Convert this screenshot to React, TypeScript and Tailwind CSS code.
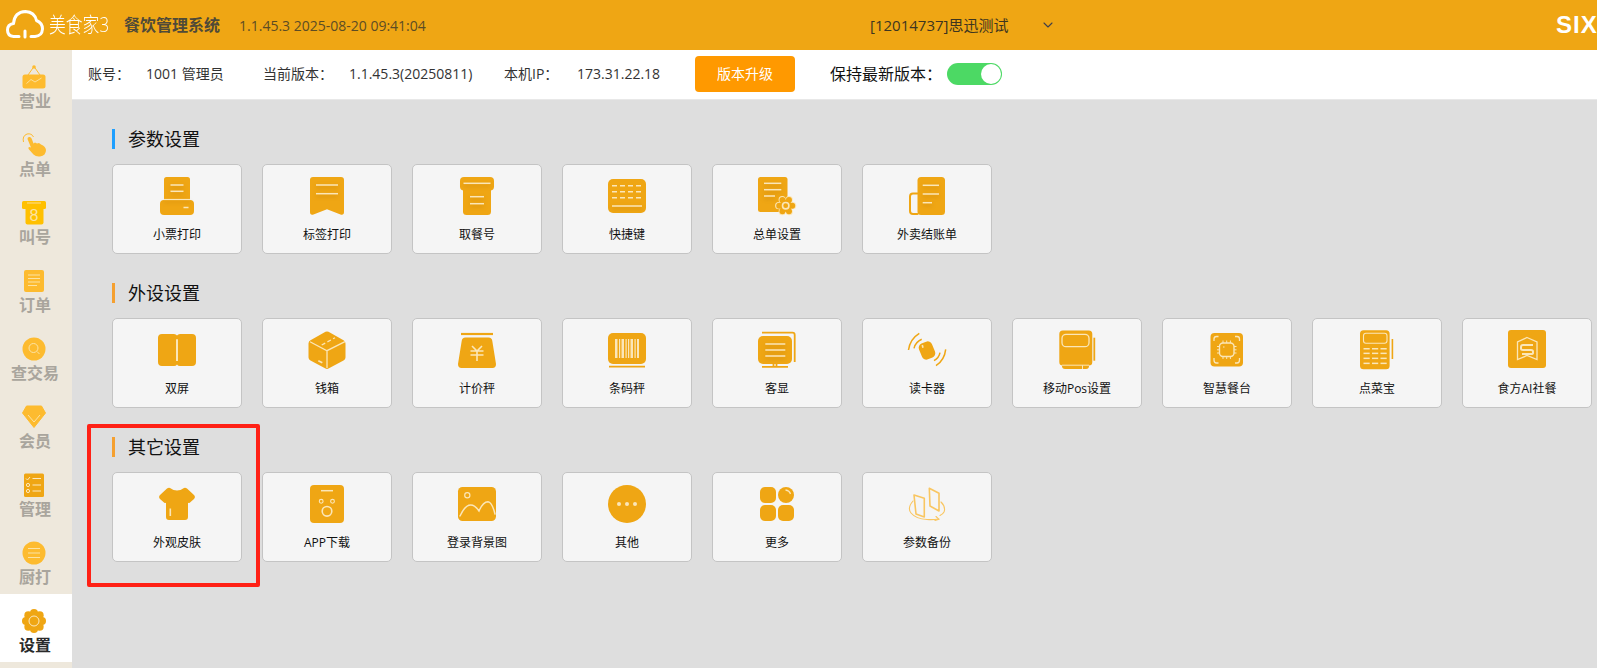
import React from 'react';
import { ChevronDown } from 'lucide-react';

const OR = '#EFA614';
const CR = '#FBE6B8';
const YL = '#FDBB2F';

type IconFn = () => React.ReactNode;

// card icons, 40x40 box
const Icon: React.FC<{ children: React.ReactNode }> = ({ children }) => (
  <svg width="40" height="40" viewBox="0 0 40 40" fill="none" strokeLinecap="round" className="block shrink-0">
    {children}
  </svg>
);

const Lines: React.FC<{ x1: number; x2: number; ys: number[]; w?: number }> = ({ x1, x2, ys, w = 1.5 }) => (
  <g className="drop-shadow-[0_2px_2px_rgba(150,90,0,0.35)]">
    {ys.map((y) => (
      <path key={y} d={`M${x1} ${y}H${x2}`} stroke={CR} strokeWidth={w} strokeLinecap="butt" />
    ))}
  </g>
);

const Petals: React.FC<{ cx: number; cy: number; r: number; pr: number; n: number; fill: string }> = ({ cx, cy, r, pr, n, fill }) => (
  <>
    {Array.from({ length: n }).map((_, i) => {
      const a = (i * Math.PI * 2) / n;
      return <circle key={i} cx={cx + Math.cos(a) * r} cy={cy + Math.sin(a) * r} r={pr} fill={fill} />;
    })}
  </>
);

const paramItems: { label: string; icon: IconFn }[] = [
  {
    label: '小票打印',
    icon: () => (
      <Icon>
        <path d="M9.5 1H30.5Q33 1 33 3.5V24H7V3.5Q7 1 9.5 1Z" fill={OR} />
        <rect x="3" y="24" width="34" height="15" rx="4" fill={OR} />
        <Lines x1={13.5} x2={26.5} ys={[9, 15.3]} />
        <Lines x1={7} x2={33} ys={[23.5]} w={1.2} />
        <path d="M26.5 31.5H31.5" stroke={CR} strokeWidth="1.5" strokeLinecap="butt" />
      </Icon>
    ),
  },
  {
    label: '标签打印',
    icon: () => (
      <Icon>
        <path d="M6 1H34Q37 1 37 4V36Q37 39.5 33.5 38.5L20 33.3L6.5 38.5Q3 39.5 3 36V4Q3 1 6 1Z" fill={OR} />
        <Lines x1={9} x2={31} ys={[9, 17.7]} />
      </Icon>
    ),
  },
  {
    label: '取餐号',
    icon: () => (
      <Icon>
        <rect x="3" y="1" width="34" height="13.5" rx="4" fill={OR} />
        <path d="M6 10H34V35.5Q34 39 30.5 39H9.5Q6 39 6 35.5Z" fill={OR} />
        <Lines x1={6.5} x2={33.5} ys={[7.3]} />
        <Lines x1={13} x2={27} ys={[20.7, 27.7]} />
      </Icon>
    ),
  },
  {
    label: '快捷键',
    icon: () => (
      <Icon>
        <rect x="1" y="3" width="38" height="34" rx="5" fill={OR} />
        {[9.7, 15.7, 21.7].map((y) => (
          <path key={y} d={`M5 ${y}H35`} stroke={CR} strokeWidth="1.5" strokeDasharray="5 3" strokeLinecap="butt" />
        ))}
        <Lines x1={5} x2={35} ys={[30]} />
      </Icon>
    ),
  },
  {
    label: '总单设置',
    icon: () => (
      <Icon>
        <rect x="1" y="1" width="29.5" height="35" rx="2.5" fill={OR} />
        <Lines x1={7} x2={24.3} ys={[7.3, 13.7]} />
        <Lines x1={7} x2={18} ys={[20]} />
        <Petals cx={28.7} cy={29.7} r={7} pr={3.6} n={6} fill={CR} />
        <Petals cx={28.7} cy={29.7} r={6.5} pr={3} n={6} fill={OR} />
        <circle cx="28.7" cy="29.7" r="6" fill={OR} />
        <circle cx="28.7" cy="29.7" r="3.2" stroke={CR} strokeWidth="1.6" />
      </Icon>
    ),
  },
  {
    label: '外卖结账单',
    icon: () => (
      <Icon>
        <rect x="10.5" y="1" width="27.5" height="38" rx="3.5" fill={OR} />
        <path d="M10.5 17.5H6Q3 17.5 3 20.5V35Q3 38 6 38H10.5" stroke={OR} strokeWidth="2" />
        <Lines x1={15.7} x2={32} ys={[9.3, 18]} />
        <Lines x1={15.7} x2={25} ys={[26.7]} />
      </Icon>
    ),
  },
];

const deviceItems: { label: string; icon: IconFn }[] = [
  {
    label: '双屏',
    icon: () => (
      <Icon>
        <path d="M5 4H17Q19 4 20 5.5Q21 4 23 4H35Q39 4 39 8V32Q39 36 35 36H23Q21 36 20 34.5Q19 36 17 36H5Q1 36 1 32V8Q1 4 5 4Z" fill={OR} />
        <path d="M20 9.3V31" stroke={CR} strokeWidth="2" strokeLinecap="butt" />
      </Icon>
    ),
  },
  {
    label: '钱箱',
    icon: () => (
      <Icon>
        <path d="M18.5 1.8Q20 1 21.5 1.8L36.5 10.2Q38.5 11.3 38.5 13.5V27.5Q38.5 29.5 36.5 30.5L21.5 38.5Q20 39.3 18.5 38.5L3.5 30.5Q1.5 29.5 1.5 27.5V13.5Q1.5 11.3 3.5 10.2Z" fill={OR} />
        <path d="M3 11.7L20 20.7L38 11.7M20 20.7V38" stroke={CR} strokeWidth="1.3" strokeLinecap="butt" />
        <path d="M14.7 15L28 7.7" stroke={CR} strokeWidth="1.3" strokeDasharray="4 2.5" strokeLinecap="butt" />
        <path d="M11.3 30.7L15.3 32.7" stroke={CR} strokeWidth="1.6" strokeLinecap="butt" />
      </Icon>
    ),
  },
  {
    label: '计价秤',
    icon: () => (
      <Icon>
        <path d="M4 4H36" stroke={OR} strokeWidth="2.2" strokeLinecap="butt" />
        <path d="M8.5 7.5H31.5Q35 7.5 35.3 11L39 34Q39 38 35.5 38H4.5Q1 38 1 34L4.7 11Q5 7.5 8.5 7.5Z" fill={OR} />
        <path d="M15 16L20 21L25 16M13.5 21H26.5M13.5 25H26.5M20 21V31" stroke={CR} strokeWidth="1.6" strokeLinecap="butt" />
      </Icon>
    ),
  },
  {
    label: '条码秤',
    icon: () => (
      <Icon>
        <rect x="1" y="3" width="38" height="31" rx="5" fill={OR} />
        <path d="M2 36.7H38" stroke={OR} strokeWidth="1.8" strokeLinecap="butt" />
        {[
          [8, 2.5],
          [12, 1.2],
          [14.5, 2.5],
          [18.5, 1.2],
          [21, 1.2],
          [23.5, 2.5],
          [27.5, 1.2],
          [30, 2],
        ].map(([x, w]) => (
          <rect key={x} x={x} y="9" width={w} height="19" fill={CR} />
        ))}
      </Icon>
    ),
  },
  {
    label: '客显',
    icon: () => (
      <Icon>
        <path d="M5 2.7H35.5Q37.7 2.7 37.7 5V32" stroke={OR} strokeWidth="1.8" strokeLinecap="butt" />
        <rect x="1" y="6" width="34" height="28" rx="5" fill={OR} />
        <path d="M5 36.8H31M16.5 34V36M19.5 34V36" stroke={OR} strokeWidth="1.8" strokeLinecap="butt" />
        <Lines x1={8.3} x2={28.3} ys={[14, 20, 26]} />
      </Icon>
    ),
  },
  {
    label: '读卡器',
    icon: () => (
      <Icon>
        <rect x="13" y="12" width="14" height="17" rx="4.5" transform="rotate(-22 20 20.5)" fill={OR} />
        <path d="M15.3 15L16 17.8" stroke={CR} strokeWidth="1.6" strokeLinecap="butt" />
        <path d="M1.5 20Q3 9 12.3 3.3M7 18.3Q8.5 12 14.7 9.3M38.7 19.3Q37.5 30 29 35.7M33 22.7Q32 28 27 30.7" stroke={OR} strokeWidth="1.5" strokeLinecap="butt" />
      </Icon>
    ),
  },
  {
    label: '移动Pos设置',
    icon: () => (
      <Icon>
        <path d="M5 35H32V36Q32 39 29 39H8Q5 39 5 36Z" fill={OR} />
        <rect x="2.3" y="0.5" width="33" height="35" rx="3.5" fill={OR} />
        <rect x="36.4" y="7.7" width="1.8" height="23" fill={OR} />
        <rect x="5" y="4.3" width="27" height="12.4" rx="4" stroke={CR} strokeWidth="1.3" />
        <path d="M5 35.2H32M25.5 35.2V39" stroke={CR} strokeWidth="1" strokeLinecap="butt" />
      </Icon>
    ),
  },
  {
    label: '智慧餐台',
    icon: () => (
      <Icon>
        <rect x="3.5" y="3" width="32.5" height="33.5" rx="4" fill={OR} />
        <path d="M7 11V9Q7 6.5 9.5 6.5H11.5M28 6.5H30Q32.5 6.5 32.5 9V11M32.5 28V30Q32.5 33 30 33H28M11.5 33H9.5Q7 33 7 30V28" stroke={CR} strokeWidth="1.3" strokeLinecap="butt" />
        <rect x="12.5" y="13" width="14.5" height="13.5" rx="3.5" stroke={CR} strokeWidth="1.4" />
        <path d="M16 13V10.5M19.7 13V10.5M23.4 13V10.5M16 26.5V29M19.7 26.5V29M23.4 26.5V29M12.5 16.5H10M12.5 19.8H10M12.5 23H10M27 16.5H29.5M27 19.8H29.5M27 23H29.5" stroke={CR} strokeWidth="1" strokeLinecap="butt" />
        <path d="M16 17H17.5" stroke={CR} strokeWidth="1" strokeLinecap="butt" />
      </Icon>
    ),
  },
  {
    label: '点菜宝',
    icon: () => (
      <Icon>
        <rect x="3" y="0.3" width="29.6" height="39" rx="3.5" fill={OR} />
        <rect x="34.6" y="9" width="1.6" height="20" fill={OR} />
        <rect x="6.5" y="3.3" width="23.5" height="10" rx="2.5" stroke={CR} strokeWidth="1.1" />
        {[18.7, 23.3, 28.3, 33.3].map((y) =>
          [6.5, 15, 23.5].map((x) => <rect key={`${x}-${y}`} x={x} y={y - 0.7} width="6.2" height="1.5" fill={CR} />),
        )}
      </Icon>
    ),
  },
  {
    label: '食方AI社餐',
    icon: () => (
      <Icon>
        <rect x="1" y="0" width="38" height="38" rx="3" fill={OR} />
        <path d="M20 7.5L30 12V29.5L20 25.5L10.5 29.5V12Z" stroke={CR} strokeWidth="1.3" strokeLinecap="butt" />
        <path d="M26 15H16Q14 15 14 17V18.5Q14 20 16 20H24Q26 20 26 21.5V23Q26 24 24 24H15" stroke={CR} strokeWidth="2" strokeLinecap="butt" />
      </Icon>
    ),
  },
];

const otherItems: { label: string; icon: IconFn }[] = [
  {
    label: '外观皮肤',
    icon: () => (
      <Icon>
        <path d="M13 4Q20 9 27 4Q28.5 3.5 30 4.5L37 11Q38.8 13 37 15L33 18.5Q31.5 19.5 31 18.5V33Q31 36 28 36H12Q9 36 9 33V18.5Q8.5 19.5 7 18.5L3 15Q1.2 13 3 11L10 4.5Q11.5 3.5 13 4Z" fill={OR} />
        <path d="M13.3 24.5V32" stroke={CR} strokeWidth="1.6" strokeLinecap="butt" />
      </Icon>
    ),
  },
  {
    label: 'APP下载',
    icon: () => (
      <Icon>
        <rect x="3" y="1" width="34" height="38" rx="4" fill={OR} />
        <path d="M14 6.7H26" stroke={CR} strokeWidth="1.5" strokeLinecap="butt" />
        <circle cx="14.2" cy="17.3" r="1.9" stroke={CR} strokeWidth="1.1" />
        <circle cx="25.5" cy="17.3" r="1.9" stroke={CR} strokeWidth="1.1" />
        <circle cx="20" cy="27.3" r="4.8" stroke={CR} strokeWidth="1.6" />
      </Icon>
    ),
  },
  {
    label: '登录背景图',
    icon: () => (
      <Icon>
        <rect x="1" y="3" width="38" height="34" rx="4.5" fill={OR} />
        <circle cx="10.3" cy="11.3" r="2.6" stroke={CR} strokeWidth="1.2" />
        <path d="M3 32Q8 21 13.7 21Q18 21 22 27Q26 17.7 31 17.7Q35 18 38 30" stroke={CR} strokeWidth="1.5" />
      </Icon>
    ),
  },
  {
    label: '其他',
    icon: () => (
      <Icon>
        <circle cx="20" cy="20" r="19" fill={OR} />
        <circle cx="12" cy="20" r="2" fill={CR} />
        <circle cx="20" cy="20" r="2" fill={CR} />
        <circle cx="28" cy="20" r="2" fill={CR} />
      </Icon>
    ),
  },
  {
    label: '更多',
    icon: () => (
      <Icon>
        <rect x="3" y="3" width="16" height="16" rx="5" fill={OR} />
        <circle cx="29" cy="11" r="8" fill={OR} />
        <rect x="3" y="21" width="16" height="16" rx="5" fill={OR} />
        <rect x="21" y="21" width="16" height="16" rx="5" fill={OR} />
        <path d="M28.5 6Q32.5 6.5 33.5 10" stroke={CR} strokeWidth="1.3" strokeLinecap="butt" />
      </Icon>
    ),
  },
  {
    label: '参数备份',
    icon: () => (
      <Icon>
        <g stroke="#F9C661" strokeWidth="1.6" strokeLinejoin="round">
          <path d="M7 11L17.3 14.3V33L9 30Z" />
          <path d="M22.3 4.3L32 9.3V27L23 22Z" />
          <path d="M6 17Q0 24 4 29Q9 35 20 35.5Q26 36 32 35" strokeWidth="1.1" />
          <path d="M34 18Q39 23 37 28Q36 30 33 31.5" strokeWidth="1.1" />
          <path d="M29 32.5L32 35.3L28 36.5" strokeWidth="1.1" />
        </g>
      </Icon>
    ),
  },
];

// sidebar icons, 24x24 box
const NavIcon: React.FC<{ children: React.ReactNode }> = ({ children }) => (
  <svg width="24" height="24" viewBox="0 0 24 24" fill="none" className="block shrink-0">
    {children}
  </svg>
);

const navItems: { label: string; active?: boolean; icon: IconFn }[] = [
  {
    label: '营业',
    icon: () => (
      <NavIcon>
        <rect x="0.5" y="9.5" width="23" height="14" rx="2.5" fill={YL} />
        <path d="M6 10L12 1.5L18 10" stroke={YL} strokeWidth="1" />
        <circle cx="12" cy="2" r="1.8" fill={YL} />
        <path d="M4.5 18.5L9 14.5L13 17L19.5 13" stroke="#FCE3A4" strokeWidth="0.9" />
      </NavIcon>
    ),
  },
  {
    label: '点单',
    icon: () => (
      <NavIcon>
        <path d="M1.5 9Q0 3 5 1Q9.5 0 11.5 4" stroke={YL} strokeWidth="1" />
        <path d="M5.5 6Q5.5 3.5 8 4Q9.5 4.5 10 6.5L11.5 10.5L13 9.5L15 10.5L17 10L19 11.5Q23.5 13 24 17Q24 22.5 18 23.5Q14 24 11.5 21.5L7 16.5Q5.5 14.5 7.5 14L9 14.5Z" fill={YL} />
      </NavIcon>
    ),
  },
  {
    label: '叫号',
    icon: () => (
      <NavIcon>
        <rect x="0" y="0" width="24" height="8" rx="1.5" fill="#FFC000" />
        <rect x="3.5" y="5" width="18" height="18.5" rx="2" fill="#FFC000" />
        <path d="M5 2H19" stroke="#FCE3A4" strokeWidth="0.9" />
        <text x="12" y="20" textAnchor="middle" fontSize="16" fill="#FCE3A4" fontFamily="'Liberation Sans', sans-serif">
          8
        </text>
      </NavIcon>
    ),
  },
  {
    label: '订单',
    icon: () => (
      <NavIcon>
        <rect x="2" y="1" width="20" height="22" rx="2" fill={YL} />
        <path d="M6 6H18M6 9.5H18M6 13H18M6 16.5H15" stroke="#FCE3A4" strokeWidth="1" />
      </NavIcon>
    ),
  },
  {
    label: '查交易',
    icon: () => (
      <NavIcon>
        <circle cx="12" cy="12" r="11.5" fill={YL} />
        <circle cx="11.5" cy="11" r="4.5" stroke="#FCE3A4" strokeWidth="1" />
        <path d="M15 14.5L17.5 17" stroke="#FCE3A4" strokeWidth="1" />
      </NavIcon>
    ),
  },
  {
    label: '会员',
    icon: () => (
      <NavIcon>
        <path d="M4.5 1H19.5L23.5 8L12 22.5L0.5 8Z" fill={YL} strokeLinejoin="round" stroke={YL} />
        <path d="M6 10L12 17L18 10" stroke="#FCE3A4" strokeWidth="1" />
      </NavIcon>
    ),
  },
  {
    label: '管理',
    icon: () => (
      <NavIcon>
        <rect x="2" y="0.5" width="20" height="23.5" rx="1.5" fill={OR} />
        <path d="M4 5.5L5.5 7L8 4M10.5 5.5H19M10.5 12H19M10.5 18H19" stroke="#FCE9C0" strokeWidth="1" />
        <circle cx="6" cy="12" r="1.6" stroke="#FCE9C0" strokeWidth="1" />
        <circle cx="6" cy="18" r="1.6" stroke="#FCE9C0" strokeWidth="1" />
      </NavIcon>
    ),
  },
  {
    label: '厨打',
    icon: () => (
      <NavIcon>
        <circle cx="12" cy="12" r="11.5" fill={YL} />
        <path d="M6 7.5H18M6 12H18M6 16.5H18" stroke="#FCE3A4" strokeWidth="1.1" />
      </NavIcon>
    ),
  },
  {
    label: '设置',
    active: true,
    icon: () => (
      <NavIcon>
        <Petals cx={12} cy={12} r={8} pr={4} n={8} fill={OR} />
        <circle cx="12" cy="12" r="8.5" fill={OR} />
        <circle cx="12" cy="12" r="5" stroke="#FCE9C0" strokeWidth="1" />
      </NavIcon>
    ),
  },
];

const sections = [
  { title: '参数设置', bar: 'bg-[#1E9FFF]', items: paramItems },
  { title: '外设设置', bar: 'bg-[#F5A030]', items: deviceItems },
  { title: '其它设置', bar: 'bg-[#F5A030]', items: otherItems },
];

export default function App() {
  return (
    <div className="relative flex h-screen w-full flex-col overflow-hidden bg-[#DEDEDE] font-['Open_Sans','Noto_Sans_CJK_SC',sans-serif] text-[#222]">
      {/* top bar */}
      <header className="flex h-[50px] shrink-0 items-center overflow-hidden bg-[#EFA614] pl-[6px]">
        <svg width="38" height="30" viewBox="0 0 38 30" fill="none" className="shrink-0">
          <path
            d="M13 26.5H7.5Q1.5 26 1.5 20Q1.5 14.5 7.5 13.5Q8.5 2 19.5 1.5Q28.5 2 30.5 10.5Q36.5 13 36.5 19Q36 26 29 26.5H25M19 21V27"
            stroke="#fff"
            strokeWidth="3"
            strokeLinecap="round"
            strokeLinejoin="round"
          />
        </svg>
        <span className="ml-[5px] w-[75px] shrink-0 origin-left scale-x-[0.8] text-[21px] font-light whitespace-nowrap text-white">美食家3</span>
        <span className="shrink-0 text-[16px] font-bold whitespace-nowrap text-[#4F4A38]">餐饮管理系统</span>
        <span className="ml-[19px] w-[631px] shrink-0 text-[14px] whitespace-nowrap text-[#5C4C24]">1.1.45.3 2025-08-20 09:41:04</span>
        <span className="w-[170px] shrink-0 text-[15px] whitespace-nowrap text-[#3D3520]">[12014737]思迅测试</span>
        <ChevronDown size={16} strokeWidth={1.6} className="shrink-0 text-[#3F3F4A]" />
        <span className="ml-[500px] shrink-0 font-['Liberation_Sans',sans-serif] text-[24px] leading-none font-bold tracking-[1px] text-white">SIX</span>
      </header>

      <div className="flex min-h-0 flex-1">
        {/* left nav */}
        <nav className="w-[72px] shrink-0 bg-[#EEE8DC]">
          {navItems.map((n) => (
            <div key={n.label} className={`flex h-[68px] flex-col items-center pt-[15px] pr-[2px] ${n.active ? 'bg-white' : ''}`}>
              <div className="mr-[2px]">{n.icon()}</div>
              <span className={`text-[16px] leading-[24px] font-bold whitespace-nowrap ${n.active ? 'text-[#2A2A2A]' : 'text-[#A9A59D]'}`}>
                {n.label}
              </span>
            </div>
          ))}
        </nav>

        <main className="min-w-0 flex-1">
          {/* info bar */}
          <div className="flex h-[50px] items-center border-b border-[#E8E8E8] bg-white pb-[2px] pl-[16px] text-[14px] whitespace-nowrap text-[#333]">
            <span className="w-[58px]">账号：</span>
            <span className="w-[117px]">1001 管理员</span>
            <span className="w-[86px]">当前版本：</span>
            <span className="w-[155px]">1.1.45.3(20250811)</span>
            <span className="w-[73px]">本机IP：</span>
            <span className="w-[118px]">173.31.22.18</span>
            <button className="flex h-[36px] w-[100px] items-center justify-center rounded-[4px] bg-[#FF9900] text-[14px] text-white">版本升级</button>
            <span className="ml-[35px] w-[117px] text-[16px] text-[#111]">保持最新版本：</span>
            <div className="flex h-[22px] w-[55px] items-center justify-end rounded-full bg-[#4CD964] pr-[1px]">
              <div className="h-[20px] w-[20px] rounded-full bg-white" />
            </div>
          </div>

          <div className="pt-[29px] pl-[40px]">
            {sections.map((s) => (
              <section key={s.title} className="mb-[29px]">
                <div className="flex h-[20px] items-center">
                  <div className={`h-[20px] w-[3px] ${s.bar}`} />
                  <h2 className="ml-[13px] text-[18px] leading-none font-normal text-[#111]">{s.title}</h2>
                </div>
                <div className="mt-[15px] flex gap-x-[20px]">
                  {s.items.map((it) => (
                    <div
                      key={it.label}
                      className="flex h-[90px] w-[130px] shrink-0 flex-col items-center rounded-[5px] border border-[#C4C4C4] bg-[#F5F5F5] pt-[11px]"
                    >
                      {it.icon()}
                      <span className="mt-[10px] text-[12px] leading-[18px] whitespace-nowrap text-[#111]">{it.label}</span>
                    </div>
                  ))}
                </div>
              </section>
            ))}
          </div>
        </main>
      </div>

      {/* red annotation box */}
      <div className="pointer-events-none absolute top-[424px] left-[87px] h-[163px] w-[173px] rounded-[2px] border-4 border-[#FF2116]" />
    </div>
  );
}
